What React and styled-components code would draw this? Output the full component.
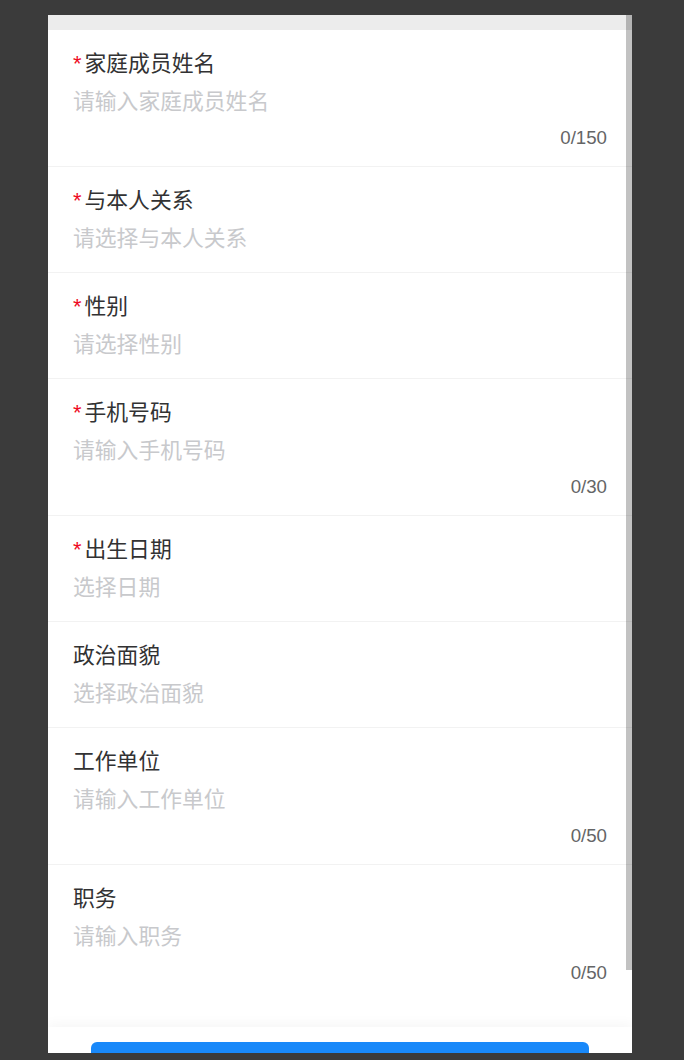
import React from "react";
import styled, { createGlobalStyle } from "styled-components";

const Global = createGlobalStyle`
  html, body { margin: 0; padding: 0; }
  body {
    background: #3b3b3b;
    font-family: "Liberation Sans", "Noto Sans CJK SC", sans-serif;
    -webkit-font-smoothing: antialiased;
  }
`;

const Frame = styled.div`
  width: 584px;
  height: 1038px;
  margin: 15px 0 0 48px;
  background: #fff;
  display: flex;
  flex-direction: column;
  overflow: hidden;
`;

const ScrollArea = styled.div`
  position: relative;
  flex: 1 1 0;
  min-height: 0;
  overflow: hidden;
`;

const TopGap = styled.div`
  height: 15px;
  background: #ececec;
`;

const Thumb = styled.div`
  position: absolute;
  top: 0;
  right: 0;
  width: 6px;
  height: 955px;
  background: rgba(0, 0, 0, 0.24);
`;

const Field = styled.div`
  padding: 15.1px 25px;
  border-bottom: ${(p) => (p.$last ? "none" : "1px solid #f2f2f2")};
  display: flex;
  flex-direction: column;
`;

const Label = styled.div`
  font-size: 21.8px;
  line-height: 37.4px;
  color: #323233;
`;

const Star = styled.span`
  color: #ee0a24;
  margin-right: 3px;
`;

const Placeholder = styled.div`
  font-size: 21.8px;
  line-height: 37.4px;
  color: #c8c9cc;
`;

const Counter = styled.div`
  margin-top: 6.2px;
  font-size: 18.7px;
  line-height: 24.9px;
  color: #646566;
  text-align: right;
`;

const Footer = styled.div`
  position: relative;
  z-index: 1;
  flex: none;
  box-sizing: border-box;
  height: 26px;
  overflow: hidden;
  padding: 15px 43px 0;
  background: #fff;
  box-shadow: 0 -4px 12px rgba(0, 0, 0, 0.035);
`;

const SubmitButton = styled.div`
  height: 68px;
  border-radius: 6px;
  background: #1989fa;
`;

const fields = [
  { label: "家庭成员姓名", req: true, ph: "请输入家庭成员姓名", count: "0/150" },
  { label: "与本人关系", req: true, ph: "请选择与本人关系" },
  { label: "性别", req: true, ph: "请选择性别" },
  { label: "手机号码", req: true, ph: "请输入手机号码", count: "0/30" },
  { label: "出生日期", req: true, ph: "选择日期" },
  { label: "政治面貌", req: false, ph: "选择政治面貌" },
  { label: "工作单位", req: false, ph: "请输入工作单位", count: "0/50" },
  { label: "职务", req: false, ph: "请输入职务", count: "0/50" },
];

export default function App() {
  return (
    <>
      <Global />
      <Frame>
        <ScrollArea>
          <TopGap />
          {fields.map((f, i) => (
            <Field key={f.label} $last={i === fields.length - 1}>
              <Label>
                {f.req && <Star>*</Star>}
                {f.label}
              </Label>
              <Placeholder>{f.ph}</Placeholder>
              {f.count && <Counter>{f.count}</Counter>}
            </Field>
          ))}
          <Thumb />
        </ScrollArea>
        <Footer>
          <SubmitButton />
        </Footer>
      </Frame>
    </>
  );
}
